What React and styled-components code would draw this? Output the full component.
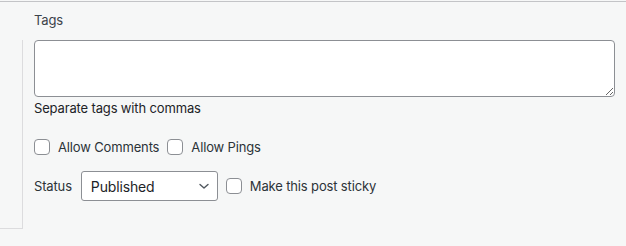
import React from 'react'
import styled, { createGlobalStyle } from 'styled-components'

const Global = createGlobalStyle`
  html, body {
    margin: 0;
    padding: 0;
    background: #f6f7f7;
  }
  body {
    font-family: Inter, "Noto Sans", "Liberation Sans", sans-serif;
    font-size: 13px;
    color: #1d2327;
    letter-spacing: -0.15px;
  }
`

const Page = styled.div`
  width: 626px;
  height: 246px;
  box-sizing: border-box;
  border-top: 1px solid #c3c4c7;
  margin-top: 1px;
  display: flex;
  background: #f6f7f7;
`

const SideBox = styled.div`
  width: 23px;
  height: 189px;
  margin-top: 38px;
  border-right: 1px solid #dcdcde;
  border-bottom: 1px solid #dcdcde;
  box-sizing: border-box;
  flex-shrink: 0;
`

const Main = styled.div`
  flex: 1;
  padding: 9px 10px 0 11px;
  display: flex;
  flex-direction: column;
`

const Label = styled.div`
  font-size: 13px;
  line-height: 18px;
  color: #3c434a;
  margin-bottom: 11px;
`

const TextArea = styled.textarea`
  display: block;
  width: 581px;
  height: 57px;
  box-sizing: border-box;
  border: 1px solid #8c8f94;
  border-radius: 4px;
  background: #fff;
  resize: vertical;
  margin: 0;
  font-family: inherit;
`

const Help = styled.div`
  font-size: 13px;
  line-height: 18px;
  margin-top: 2px;
  color: #1d2327;
`

const Row = styled.div`
  display: flex;
  align-items: center;
  gap: 8px;
  margin-top: ${(p) => p.top}px;
`

const Check = styled.label`
  display: flex;
  align-items: center;
  gap: 8px;
  font-size: 13px;
  color: #2c3338;
`

const Box = styled.span`
  width: 16px;
  height: 16px;
  box-sizing: border-box;
  border: 1px solid #8c8f94;
  border-radius: 4px;
  background: #fff;
  display: inline-block;
`

const StatusLabel = styled.span`
  font-size: 13px;
  color: #2c3338;
  margin-right: 1px;
`

const Select = styled.div`
  width: 137px;
  height: 30px;
  box-sizing: border-box;
  border: 1px solid #8c8f94;
  border-radius: 3px;
  background: #fff;
  display: flex;
  align-items: center;
  justify-content: space-between;
  padding: 0 6px 0 9px;
  font-size: 14px;
  color: #1d2327;
`

const Chevron = () => (
  <svg width="14" height="14" viewBox="0 0 14 14" fill="none">
    <path d="M3 5.5 L7 9 L11 5.5" stroke="#50575e" strokeWidth="1.4" strokeLinecap="round" strokeLinejoin="round" />
  </svg>
)

export default function App() {
  return (
    <>
      <Global />
      <Page>
        <SideBox />
        <Main>
          <Label>Tags</Label>
          <TextArea />
          <Help>Separate tags with commas</Help>
          <Row top={22}>
            <Check><Box />Allow Comments</Check>
            <Check><Box />Allow Pings</Check>
          </Row>
          <Row top={16}>
            <StatusLabel>Status</StatusLabel>
            <Select>
              <span>Published</span>
              <Chevron />
            </Select>
            <Check><Box />Make this post sticky</Check>
          </Row>
        </Main>
      </Page>
    </>
  )
}
